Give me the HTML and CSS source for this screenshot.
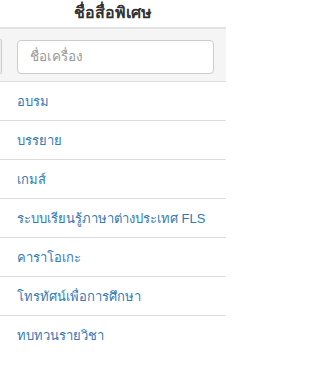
FILE: index.html
```html
<!DOCTYPE html>
<html lang="th">
<head>
<meta charset="utf-8">
<link rel="stylesheet" href="styles.css">
</head>
<body>
<div class="page">
  <div class="title">ชื่อสื่อพิเศษ</div>
  <div class="search-band">
    <div class="stub"></div>
    <input class="search" type="text" placeholder="ชื่อเครื่อง">
  </div>
  <ul class="menu">
    <li><a href="#">อบรม</a></li>
    <li><a href="#">บรรยาย</a></li>
    <li><a href="#">เกมส์</a></li>
    <li><a href="#">ระบบเรียนรู้ภาษาต่างประเทศ FLS</a></li>
    <li><a href="#">คาราโอเกะ</a></li>
    <li><a href="#">โทรทัศน์เพื่อการศึกษา</a></li>
    <li><a href="#">ทบทวนรายวิชา</a></li>
  </ul>
</div>
</body>
</html>
```
FILE: styles.css
```css
html, body {
  margin: 0;
  padding: 0;
  background: #fff;
  font-family: "Liberation Sans", Tahoma, "Noto Sans", sans-serif;
  color: #333;
}
.page {
  width: 226px;
}
.title {
  height: 27px;
  line-height: 25px;
  text-align: center;
  font-weight: bold;
  font-size: 16px;
  color: #333;
  border-bottom: 2px solid #e3e3e3;
}
.search-band {
  display: flex;
  align-items: center;
  gap: 15px;
  background: #f5f5f5;
  padding: 10px 12px 7px 0;
  border-bottom: 1px solid #ddd;
}
.stub {
  width: 1px;
  height: 33px;
  background: #eee;
  border: 1px solid #ccc;
  border-left: none;
  border-radius: 0 3px 3px 0;
}
.search {
  flex: 1;
  min-width: 0;
  height: 34px;
  box-sizing: border-box;
  border: 1px solid #ccc;
  border-radius: 4px;
  background: #fff;
  padding: 0 12px;
  font-family: inherit;
  font-size: 13.5px;
  color: #555;
}
.search::placeholder {
  color: #999;
}
.menu {
  list-style: none;
  margin: 0;
  padding: 0;
}
.menu li {
  height: 38px;
  display: flex;
  align-items: center;
  padding-left: 17px;
  border-bottom: 1px solid #ddd;
}
.menu li:last-child {
  border-bottom: none;
}
.menu a {
  color: #337ab7;
  text-decoration: none;
  font-size: 13px;
}
```
